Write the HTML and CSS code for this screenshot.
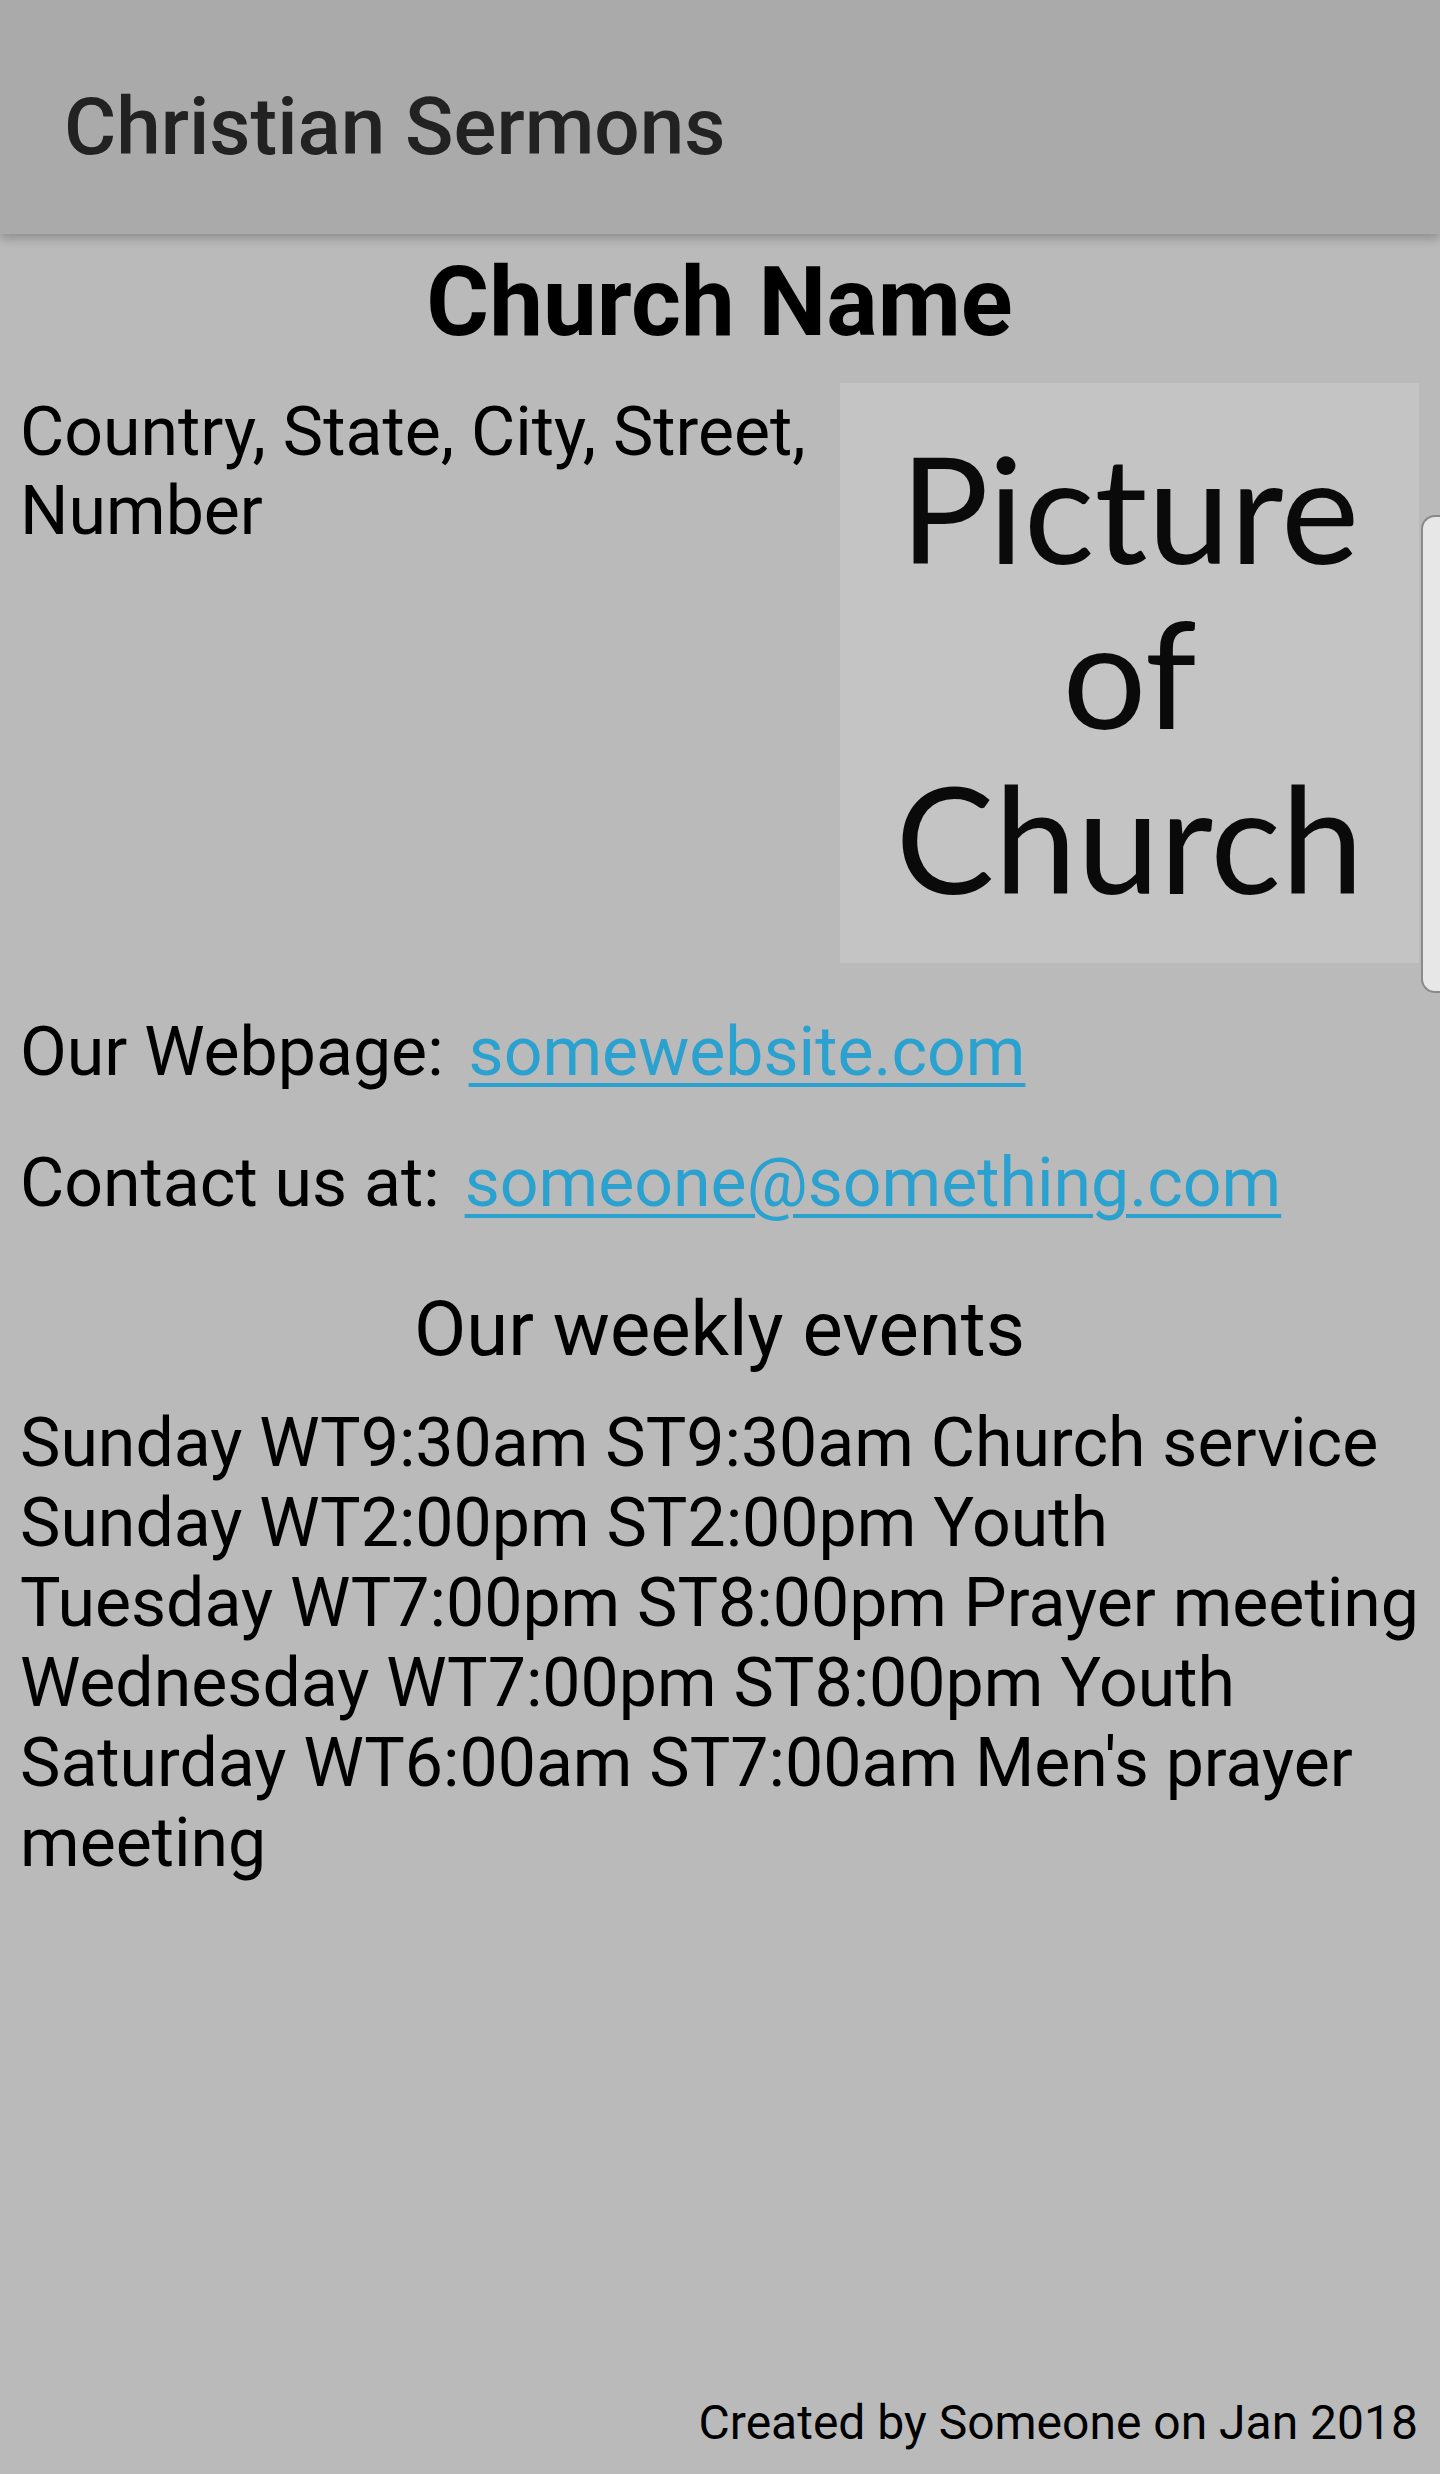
FILE: index.html
```html
<!DOCTYPE html>
<html lang="en">

<head>
  <meta charset="UTF-8" />
  <title>Christian Sermons</title>
  <link rel="stylesheet" href="styles.css">
</head>

<body>
  <div class="page">
    <div class="app-bar">Christian Sermons</div>

    <div class="content">
      <div class="church-name">Church Name</div>

      <div class="info-row">
        <div class="address">Country, State, City, Street, Number</div>
        <div class="picture">Picture<br />of<br />Church</div>
      </div>

      <div class="contact">
        <span class="label">Our Webpage:</span>
        <a href="#">somewebsite.com</a>
      </div>
      <div class="contact">
        <span class="label">Contact us at:</span>
        <a href="#">someone@something.com</a>
      </div>

      <div class="events-title">Our weekly events</div>
      <div class="events">
        <div>Sunday WT9:30am ST9:30am Church service</div>
        <div>Sunday WT2:00pm ST2:00pm Youth</div>
        <div>Tuesday WT7:00pm ST8:00pm Prayer meeting</div>
        <div>Wednesday WT7:00pm ST8:00pm Youth</div>
        <div>Saturday WT6:00am ST7:00am Men's prayer meeting</div>
      </div>
    </div>

    <div class="footer">Created by Someone on Jan 2018</div>
  </div>

  <div class="edge-handle"></div>
</body>

</html>
```

FILE: styles.css
```css
body {
  margin: 0;
  background-color: #bbbabb;
  font-family: Roboto, "Liberation Sans", sans-serif;
  color: #000;
}

.page {
  min-height: 100vh;
  display: flex;
  flex-direction: column;
}

.app-bar {
  height: 234px;
  box-sizing: border-box;
  padding: 20px 64px 0;
  line-height: 214px;
  background-color: #aaaaaa;
  color: #222;
  font-size: 80px;
  font-weight: 500;
  box-shadow: 0 4px 10px rgba(0, 0, 0, 0.25);
  position: relative;
}

.content {
  padding: 0 21px 0 20px;
}

.church-name {
  margin-top: 11px;
  text-align: center;
  font-size: 96px;
  font-weight: bold;
  line-height: 1.2;
}

.info-row {
  display: flex;
  align-items: flex-start;
  gap: 20px;
  margin-top: 23px;
}

.address {
  flex: 1;
  padding-top: 10px;
  font-size: 68px;
  line-height: 79px;
}

.picture {
  flex: none;
  width: 579px;
  height: 580px;
  box-sizing: border-box;
  padding-top: 42px;
  background-color: #c4c4c4;
  text-align: center;
  font-family: Lato, "Open Sans", sans-serif;
  font-size: 148px;
  line-height: 165px;
  color: #0a0a0a;
}

.contact {
  display: flex;
  gap: 25px;
  font-size: 68px;
  line-height: 79px;
  margin-top: 50px;
}

.contact + .contact {
  margin-top: 52px;
}

.contact a {
  color: #2aa1cf;
  text-decoration: underline;
  text-decoration-thickness: 4px;
  text-underline-offset: 8px;
}

.events-title {
  margin-top: 61px;
  text-align: center;
  font-size: 76px;
  line-height: 1.2;
}

.events {
  margin: 28px -16px 0 0;
  font-size: 68px;
  line-height: 80px;
}

.footer {
  margin-top: auto;
  padding: 0 22px 22px;
  text-align: right;
  font-size: 48px;
  line-height: 1.2;
}

.edge-handle {
  position: absolute;
  top: 515px;
  right: 0;
  width: 17px;
  height: 474px;
  background-color: #e7e7e7;
  border: 2px solid #8a8a8a;
  border-right: none;
  border-radius: 14px 0 0 14px;
}
```
